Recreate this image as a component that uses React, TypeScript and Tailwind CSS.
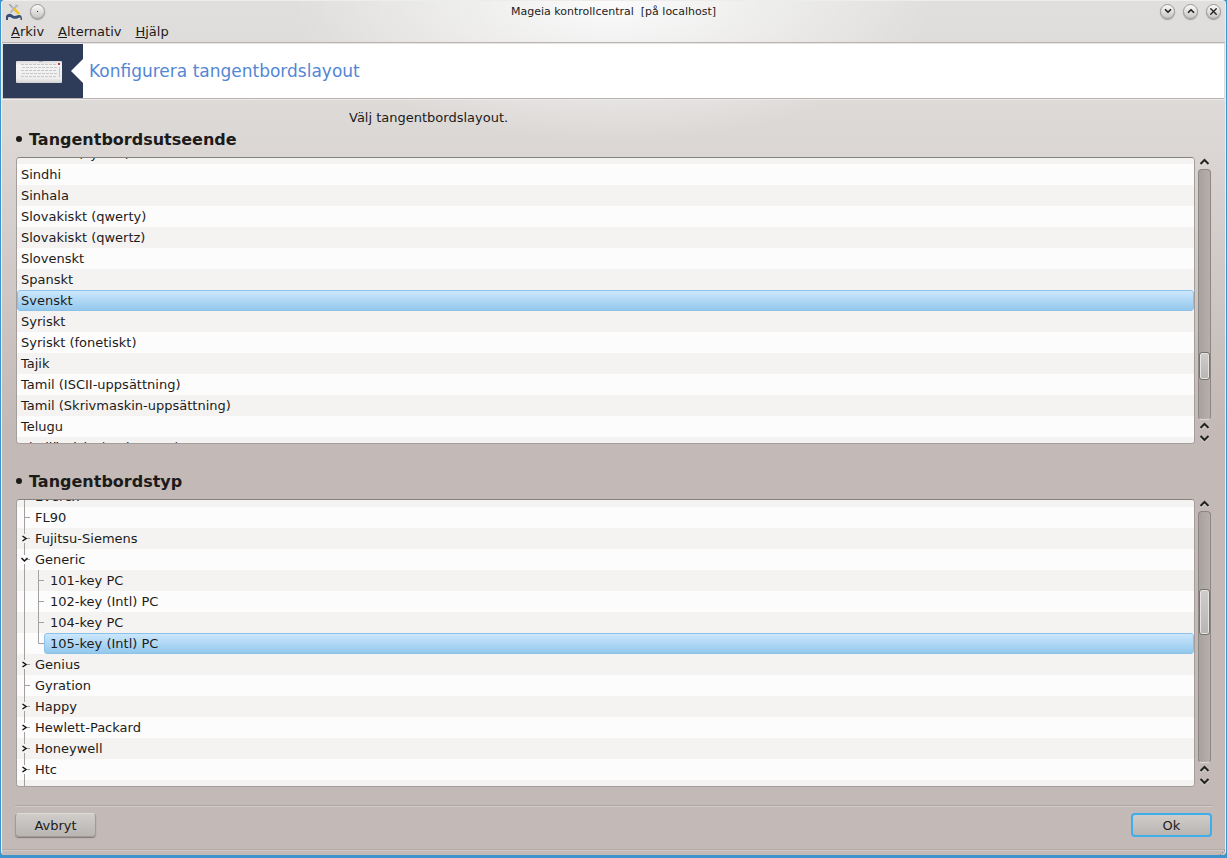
import React from "react";
import { ChevronDown, ChevronUp, X } from "lucide-react";

const layouts = [
  "Serbiskt (cyrillic)",
  "Sindhi",
  "Sinhala",
  "Slovakiskt (qwerty)",
  "Slovakiskt (qwertz)",
  "Slovenskt",
  "Spanskt",
  "Svenskt",
  "Syriskt",
  "Syriskt (fonetiskt)",
  "Tajik",
  "Tamil (ISCII-uppsättning)",
  "Tamil (Skrivmaskin-uppsättning)",
  "Telugu",
  "Thailändskt (Kedmanee)",
];

type Node = { name: string; state?: "open" | "closed"; child?: boolean; last?: boolean };

const models: Node[] = [
  { name: "Everex" },
  { name: "FL90" },
  { name: "Fujitsu-Siemens", state: "closed" },
  { name: "Generic", state: "open" },
  { name: "101-key PC", child: true },
  { name: "102-key (Intl) PC", child: true },
  { name: "104-key PC", child: true },
  { name: "105-key (Intl) PC", child: true, last: true },
  { name: "Genius", state: "closed" },
  { name: "Gyration" },
  { name: "Happy", state: "closed" },
  { name: "Hewlett-Packard", state: "closed" },
  { name: "Honeywell", state: "closed" },
  { name: "Htc", state: "closed" },
  { name: "" },
];

const selectedRow =
  "rounded-[3px] border border-[#8cc2e8] bg-gradient-to-b from-[#cbe7fd] to-[#94c8ec]";

const TitleButton = ({ label, children }: { label: string; children: React.ReactNode }) => (
  <button
    aria-label={label}
    className="flex h-[15px] w-[15px] items-center justify-center rounded-full border border-[#9a9794] bg-gradient-to-b from-[#fafafa] to-[#c9c6c3] text-[#222] shadow-[0_1px_1px_rgba(0,0,0,0.3)]"
  >
    {children}
  </button>
);

const Arrow = ({ down }: { down?: boolean }) => (
  <svg width="11" height="8" viewBox="0 0 11 8" fill="none">
    <path d={down ? "M1.5 3L5.500 7L9.500 3" : "M1.500 7L5.500 3L9.500 7"} stroke="#e8e5e3" strokeWidth="2" />
    <path d={down ? "M1.500 2L5.500 6L9.500 2" : "M1.500 6L5.500 2L9.500 6"} stroke="#222" strokeWidth="2" />
  </svg>
);

const Scrollbar = ({ thumb }: { thumb: React.ReactNode }) => (
  <div className="flex w-[13px] shrink-0 flex-col items-center">
    <button aria-label="Upp" className="mb-[3px] flex h-[9px] items-center">
      <Arrow />
    </button>
    <div className="flex w-full flex-1 flex-col rounded-[4px] border border-[#8d8784] border-b-[#dedad8] bg-gradient-to-r from-[#a8a19e] to-[#b7afac]">
      {thumb}
    </div>
    <button aria-label="Upp" className="flex h-3 items-center">
      <Arrow />
    </button>
    <button aria-label="Ned" className="flex h-3 items-center">
      <Arrow down />
    </button>
  </div>
);

const Thumb = ({ className }: { className: string }) => (
  <div
    className={`w-full rounded-[3px] border border-[#77726f] bg-gradient-to-b from-[#cfccca] to-[#b9b5b2] shadow-[inset_0_0_0_1px_#e6e4e2] ${className}`}
  />
);

const Heading = ({ children }: { children: React.ReactNode }) => (
  <h2 className="flex h-[22px] items-center text-[16px] font-bold">
    <span className="mr-[7px] h-[6px] w-[6px] rounded-full bg-[#1c1b1a]" />
    {children}
  </h2>
);

// lines and arrow to the left of a tree item
const Branch = ({ node }: { node: Node }) => (
  <svg width={node.child ? 27 : 13} height="21" className="shrink-0" fill="none">
    <path
      d={node.state ? "M7.5 0V6M7.5 15V21M10 10.5H13" : node.child ? "M7.5 0V21" : "M7.5 0V21M8 10.5H13"}
      stroke="#a3a19f"
    />
    {node.child && <path d={node.last ? "M21.5 0V10.5H27" : "M21.5 0V21M22 10.5H27"} stroke="#a3a19f" />}
    {node.state === "closed" && <path d="M5.5 8L9 10.5L5.5 13" stroke="#111" strokeWidth="1.5" />}
    {node.state === "open" && <path d="M4.5 9L7.5 12L10.5 9" stroke="#111" strokeWidth="1.5" />}
  </svg>
);

const MageiaIcon = () => (
  <svg width="16" height="17" viewBox="0 0 16 17" fill="none">
    <path d="M4 2L11 9M4.500 9.500L10.500 3" stroke="#b4b9bc" strokeWidth="2" />
    <path d="M3 1L5.500 3.500M10 1.500L12 3.500" stroke="#8e9496" />
    <path d="M8 5.500L13 11" stroke="#f3c21c" strokeWidth="2.500" />
    <path
      d="M0 17V13C2 10 5 10 7 12.500C9 13.500 11 12.500 13 12C15 12 16 13 16 17H14.500V14.500C12 15 10 16.500 7 15.500C5 14 3 13.500 2 14.500V17Z"
      fill="#3a4f78"
    />
  </svg>
);

const KeyboardBadge = () => (
  <svg width="80" height="54" viewBox="0 0 80 54" className="shrink-0">
    <defs>
      <linearGradient id="keys" x1="0" y1="0" x2="0" y2="1">
        <stop offset="0" stopColor="#dcdcdc" />
        <stop offset="0.2" stopColor="#f4f4f4" />
        <stop offset="0.8" stopColor="#ededed" />
        <stop offset="1" stopColor="#d2d2d2" />
      </linearGradient>
    </defs>
    <path d="M0 0H80V54H0Z" fill="#2f3c59" />
    <path d="M80 15L68 27L80 39Z" fill="#fff" />
    <rect x="13" y="17" width="46" height="22" rx="1" fill="url(#keys)" />
    <path d="M36 17H40V18H36Z" fill="#aaa" />
    <path
      d="M18 20.500H54M19 23.500H54M18 26.500H54M19 29.500H54M18 32.500H54"
      stroke="#c9c9c9"
      strokeDasharray="3 1"
    />
    <path d="M56.500 23V33" stroke="#c4c4c4" />
    <rect x="55" y="19" width="2" height="2" fill="#c83a3a" />
  </svg>
);

const App = () => {
  return (
    <div className="min-h-screen bg-[#3f94cb] px-px pb-[3px] font-['DejaVu_Sans',sans-serif] text-[13px] leading-[21px] text-[#1c1b1a]">
      <div className="overflow-hidden rounded-[4px] border-x border-t border-[#efedec] bg-[#c3b9b6] bg-[radial-gradient(ellipse_320px_140px_at_50%_0,#ffffffe0,#ffffff00),linear-gradient(#e0dfde,#dcd8d6_130px,#c3b9b6_430px)]">
        <header className="flex h-[20px] items-center px-1">
          <div className="flex flex-1 items-center gap-2">
            <MageiaIcon />
            <TitleButton label="Meny">
              <span className="h-px w-px bg-[#222]" />
            </TitleButton>
          </div>
          <h1 className="whitespace-pre text-[11px]">Mageia kontrollcentral  [på localhost]</h1>
          <div className="flex flex-1 items-center justify-end gap-2">
            <TitleButton label="Minimera">
              <ChevronDown size={10} strokeWidth={4} />
            </TitleButton>
            <TitleButton label="Maximera">
              <ChevronUp size={10} strokeWidth={4} />
            </TitleButton>
            <TitleButton label="Stäng">
              <X size={11} strokeWidth={3} />
            </TitleButton>
          </div>
        </header>
        <nav className="flex h-[22px] items-center gap-[14px] border-b border-[#b9b4b1] px-[9px]">
          <button><u>A</u>rkiv</button>
          <button><u>A</u>lternativ</button>
          <button><u>H</u>jälp</button>
        </nav>
        <div className="mx-px flex h-14 items-center border-b border-t border-b-[#b9b1ae] border-t-[#e8e6e5] bg-white">
          <KeyboardBadge />
          <h2 className="ml-[6px] text-[17px] text-[#5486d4]">Konfigurera tangentbordslayout</h2>
        </div>

        <main className="border-t border-[#efedec] px-[14px] pt-[7px]">
          <p className="pl-[333px]">Välj tangentbordslayout.</p>
          <Heading>Tangentbordsutseende</Heading>
          <section className="mt-[7px] flex gap-[3px]">
            <div className="h-[287px] flex-1 overflow-hidden rounded-[4px] border border-[#a39e9b] border-t-[#85817f] bg-[#f4f3f2]">
              <ul className="-mt-[15px]">
                {layouts.map((name) => (
                  <li key={name} className="h-[21px] odd:bg-[#f4f3f2] even:bg-[#fcfcfc]">
                    <div className={name === "Svenskt" ? `flex h-full items-center pl-[3px] ${selectedRow}` : "pl-1"}>
                      {name}
                    </div>
                  </li>
                ))}
              </ul>
            </div>
            <Scrollbar thumb={<Thumb className="mt-[182px] h-7" />} />
          </section>

          <div className="mt-[26px]">
            <Heading>Tangentbordstyp</Heading>
          </div>
          <section className="mt-[7px] flex gap-[3px]">
            <div className="h-[288px] flex-1 overflow-hidden rounded-[4px] border border-[#a39e9b] border-t-[#85817f] bg-[#f4f3f2]">
              <ul className="-mt-[14px]">
                {models.map((node) => (
                  <li key={node.name} className="flex h-[21px] odd:bg-[#f4f3f2] even:bg-[#fcfcfc]">
                    <Branch node={node} />
                    <div className={node.last ? `flex flex-1 items-center pl-[5px] ${selectedRow}` : node.child ? "pl-[6px]" : "pl-[5px]"}>
                      {node.name}
                    </div>
                  </li>
                ))}
              </ul>
            </div>
            <Scrollbar thumb={<Thumb className="mt-[77px] h-[46px]" />} />
          </section>
        </main>

        <footer className="mx-[13px] mt-[18px] flex justify-between border-t border-[#aea6a3] pt-[7px] shadow-[inset_0_1px_0_#d3ccc9]">
          <button className="h-6 w-[81px] rounded-[4px] border border-[#a09b98] border-t-[#dedbd9] bg-gradient-to-b from-[#cfccca] to-[#b9b5b2] shadow-[0_1px_1px_rgba(0,0,0,0.35)]">
            Avbryt
          </button>
          <button className="h-6 w-[81px] rounded-[4px] border-2 border-[#3daee9] bg-gradient-to-b from-[#cfccca] to-[#b9b5b2]">
            Ok
          </button>
        </footer>
        <div className="mt-3 flex h-[6px] items-end justify-end border-t border-[#b2aaa7] shadow-[inset_0_1px_0_#d0c9c6]">
          <svg width="5" height="5">
            <path d="M0 4H1V5H0ZM2 2H3V3H2ZM4 0H5V1H4Z" fill="#8a8380" />
          </svg>
        </div>
      </div>
    </div>
  );
};

export default App;
